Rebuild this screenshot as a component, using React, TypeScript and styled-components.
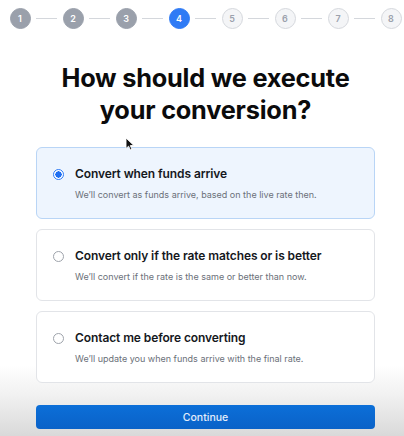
import React, { useState } from "react";
import styled, { createGlobalStyle, css } from "styled-components";

const GlobalStyle = createGlobalStyle`
  * {
    box-sizing: border-box;
  }

  html,
  body {
    margin: 0;
    padding: 0;
  }

  body {
    font-family: Inter, "Liberation Sans", Arial, sans-serif;
    background: #fff;
  }
`;

type StepState = "done" | "active" | "todo";

const STEPS = [1, 2, 3, 4, 5, 6, 7, 8];
const CURRENT = 4;

const OPTIONS = [
  {
    id: "arrive",
    title: "Convert when funds arrive",
    description: "We’ll convert as funds arrive, based on the live rate then.",
  },
  {
    id: "match",
    title: "Convert only if the rate matches or is better",
    description: "We’ll convert if the rate is the same or better than now.",
  },
  {
    id: "contact",
    title: "Contact me before converting",
    description: "We’ll update you when funds arrive with the final rate.",
  },
];

function App() {
  const [selected, setSelected] = useState("arrive");

  return (
    <StyledRoot>
      <GlobalStyle />
      <StyledStepper>
        {STEPS.map((step, i) => {
          const state: StepState =
            step < CURRENT ? "done" : step === CURRENT ? "active" : "todo";
          return (
            <React.Fragment key={step}>
              {i > 0 && <StyledConnector />}
              <StyledStep $state={state}>{step}</StyledStep>
            </React.Fragment>
          );
        })}
      </StyledStepper>

      <StyledTitle>
        How should we execute
        <br />
        your conversion?
      </StyledTitle>

      <StyledOptions>
        {OPTIONS.map((option) => {
          const active = option.id === selected;
          return (
            <StyledCard
              key={option.id}
              $active={active}
              onClick={() => setSelected(option.id)}
            >
              <StyledRadio $active={active} />
              <StyledCardText>
                <StyledCardTitle>{option.title}</StyledCardTitle>
                <StyledCardDescription>
                  {option.description}
                </StyledCardDescription>
              </StyledCardText>
            </StyledCard>
          );
        })}
      </StyledOptions>

      <StyledButton type="button">Continue</StyledButton>

      <StyledCursor width="10" height="14" viewBox="0 0 10 14">
        <path
          d="M1 1 L1 11.5 L3.6 9.2 L5.4 13 L7 12.3 L5.3 8.6 L8.8 8.4 Z"
          fill="#111"
          stroke="#fff"
          strokeWidth="0.9"
          strokeLinejoin="round"
        />
      </StyledCursor>
    </StyledRoot>
  );
}

export default App;

const StyledRoot = styled.main`
  position: relative;
  width: 404px;
  height: 436px;
  overflow: hidden;

  display: flex;
  flex-direction: column;
  align-items: center;

  padding: 8px 0 0 7px;

  background: linear-gradient(
    to bottom,
    #ffffff 0px,
    #ffffff 365px,
    #f1f1f1 395px,
    #d9d9d9 436px
  );
`;

const StyledStepper = styled.div`
  align-self: flex-start;
  display: flex;
  align-items: center;

  padding-left: 2.5px;
`;

const StyledConnector = styled.div`
  width: 21px;
  height: 1px;

  margin: 0 5.5px;

  background-color: #d4d7dc;
`;

const stepColors = {
  done: css`
    background-color: #9aa0ab;
    border-color: #9aa0ab;
    color: #ffffff;
  `,
  active: css`
    background-color: #2f7bf5;
    border-color: #2f7bf5;
    color: #ffffff;
  `,
  todo: css`
    background-color: #f4f5f7;
    border-color: #d5d8dd;
    color: #9ca2ad;
  `,
};

const StyledStep = styled.div<{ $state: StepState }>`
  width: 21px;
  height: 21px;

  display: flex;
  align-items: center;
  justify-content: center;

  border: 1px solid;
  border-radius: 50%;

  font-size: 9px;
  font-weight: 600;

  ${({ $state }) => stepColors[$state]}
`;

const StyledTitle = styled.h1`
  margin: 33px 0 0;

  font-size: 25.3px;
  font-weight: 700;
  line-height: 32px;
  letter-spacing: -0.2px;
  text-align: center;

  color: #0b0b0c;
`;

const StyledOptions = styled.div`
  width: 339px;

  display: flex;
  flex-direction: column;
  gap: 10px;

  margin-top: 21px;
`;

const StyledCard = styled.div<{ $active: boolean }>`
  height: 72px;

  display: flex;
  align-items: flex-start;
  gap: 11px;

  padding: 18px 16px 0 16px;

  border: 1px solid ${({ $active }) => ($active ? "#b9d5f6" : "#e2e4e8")};
  border-radius: 6px;

  background-color: ${({ $active }) => ($active ? "#eef5fe" : "#ffffff")};

  cursor: pointer;
`;

const StyledRadio = styled.span<{ $active: boolean }>`
  flex: none;

  width: 11px;
  height: 11px;

  margin-top: 2.5px;

  border-radius: 50%;

  ${({ $active }) =>
    $active
      ? css`
          border: 1.5px solid #2f7bf5;
          background: radial-gradient(circle, #1f6ff2 0 3px, #ffffff 3.3px);
        `
      : css`
          border: 1px solid #9ea3ab;
          background-color: #ffffff;
        `}
`;

const StyledCardText = styled.div`
  display: flex;
  flex-direction: column;
  gap: 6px;
`;

const StyledCardTitle = styled.div`
  font-size: 12px;
  font-weight: 600;
  line-height: 16px;
  letter-spacing: -0.1px;
  white-space: nowrap;

  color: #15181d;
`;

const StyledCardDescription = styled.div`
  font-size: 9px;
  line-height: 14px;
  white-space: nowrap;

  color: #6b7079;
`;

const StyledButton = styled.button`
  width: 339px;
  height: 24px;

  margin-top: 22px;

  border: none;
  border-radius: 4px;

  background: linear-gradient(to bottom, #0c6fd8, #0a62c8);
  color: #e4eefb;

  font-family: inherit;
  font-size: 10.5px;
  font-weight: 500;

  cursor: pointer;
`;

const StyledCursor = styled.svg`
  position: absolute;
  top: 137px;
  left: 125px;
`;
